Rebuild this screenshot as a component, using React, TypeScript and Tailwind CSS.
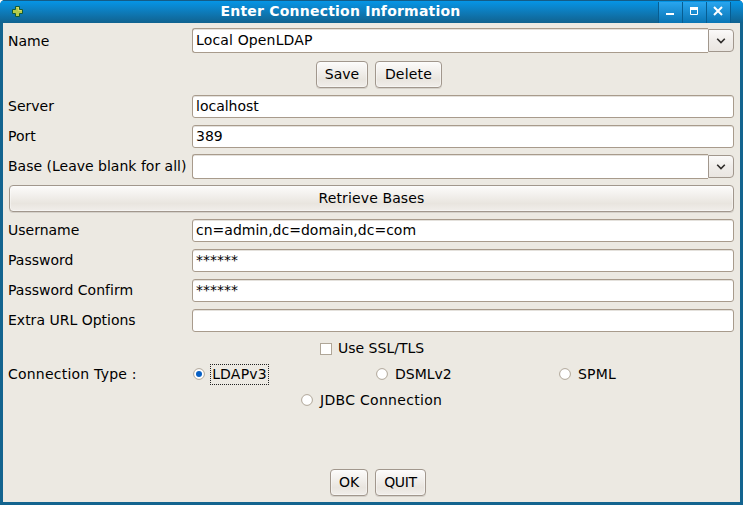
import type { ReactNode } from "react";

const fieldBorder = "border border-[#a89b8c] shadow-[inset_0_1px_0_#e4e1dc]";

function Label({ children, className = "pb-[2px]" }: { children: ReactNode; className?: string }) {
  return <span className={`whitespace-nowrap ${className}`}>{children}</span>;
}

function Row({
  label,
  children,
  className = "",
  labelClass = "pb-[2px]",
}: {
  label: string;
  children: ReactNode;
  className?: string;
  labelClass?: string;
}) {
  return (
    <div className={`flex h-[23px] items-center pl-[5px] pr-[6px] ${className}`}>
      <Label className={`w-[184px] shrink-0 ${labelClass}`}>{label}</Label>
      {children}
    </div>
  );
}

function TextField({ value }: { value: string }) {
  return (
    <div className={`flex h-[23px] flex-1 items-center rounded-[3px] bg-white pb-[2px] pl-[3px] ${fieldBorder}`}>
      {value}
    </div>
  );
}

function Combo({ value }: { value: string }) {
  return (
    <div className="flex h-[25px] flex-1 items-center">
      <div
        className={`flex h-[25px] flex-1 items-center rounded-l-[3px] border-r-0 bg-white pb-[2px] pl-[3px] tracking-[0.15px] ${fieldBorder}`}
      >
        {value}
      </div>
      <div className="flex h-[23px] w-[26px] items-center justify-center rounded-r-[4px] border border-[#a1978d] bg-linear-to-b from-[#fbfaf9] via-[#f0edea] to-[#eae6e1]">
        <svg width="10" height="6" viewBox="0 0 10 6" fill="none" stroke="#2f2c2a" strokeWidth="1.6">
          <path d="M1.2.8 5 4.6 8.8.8" />
        </svg>
      </div>
    </div>
  );
}

function Button({ children, className }: { children: ReactNode; className: string }) {
  return (
    <button
      className={`flex h-[27px] items-center justify-center rounded-[4px] border border-[#a1978d] bg-linear-to-b from-[#fbfaf9] from-5% via-[#e9e5df] via-70% to-[#f1eeea] pb-[2px] shadow-[0_1px_0_#d5d1ca,inset_0_0_0_1px_#ffffff66] ${className}`}
    >
      {children}
    </button>
  );
}

function Radio({ checked = false }: { checked?: boolean }) {
  return (
    <svg className="-mt-px shrink-0" width="12" height="12" viewBox="0 0 12 12">
      <circle cx="6" cy="6" r="5.4" fill="#fff" stroke="#afa698" />
      {checked && <circle cx="6" cy="6" r="3" fill="#0860c4" />}
    </svg>
  );
}

function Caption({ kind }: { kind: "min" | "max" | "close" }) {
  return (
    <div className="h-[21px] w-6 border-l border-[#075d91] bg-linear-to-b from-[#28a5ef] to-[#0875b4]">
      <svg width="23" height="21" viewBox="0 0 23 21" fill="none" stroke="#fff">
        {kind === "min" && <path d="M7 12h8" strokeWidth="2" />}
        {kind === "max" && <path d="M7.5 6v6.5h7V6" strokeWidth="1" />}
        {kind === "max" && <path d="M7 6.5h8" strokeWidth="3" />}
        {kind === "close" && <path d="m7 5 8 8M15 5l-8 8" strokeWidth="2" />}
      </svg>
    </div>
  );
}

export default function App() {
  return (
    <div className="flex h-[505px] w-[743px] flex-col bg-white font-['DejaVu_Sans',sans-serif] text-[14px] leading-4 text-black [font-variant-ligatures:none]">
      <div className="flex h-[505px] flex-col overflow-hidden rounded-t-[5px] bg-[#13648f]">
        <header className="flex h-[23px] items-start border-t border-t-[#145c86] bg-linear-to-b from-[#0595e6] to-[#10628f]">
          <svg className="ml-3 mt-[5px] shrink-0" width="11" height="11" viewBox="0 0 11 11">
            <path d="M3.5.5h4v3h3v4h-3v3h-4v-3h-3v-4h3z" fill="#b5cb4a" stroke="#145b36" />
            <path d="M4.5 1.5h2v3h3" fill="none" stroke="#d5dc72" />
          </svg>
          <h1 className="w-[635px] whitespace-nowrap pt-[3px] text-center text-[14px] font-bold leading-[15px] tracking-[0.22px] text-white">
            Enter Connection Information
          </h1>
          <div className="mt-px flex">
            <Caption kind="min" />
            <Caption kind="max" />
            <Caption kind="close" />
            <div className="h-[21px] w-px bg-[#075d91]" />
          </div>
        </header>
        <main className="mx-[3px] flex h-[479px] flex-col bg-[#ece9e2]">
          <Row label="Name" className="mt-[6px]" labelClass=""><Combo value="Local OpenLDAP" /></Row>
          <div className="mt-[9px] flex gap-[7px] pl-[313px]">
            <Button className="w-[52px]">Save</Button>
            <Button className="w-[67px] tracking-[0.2px]">Delete</Button>
          </div>
          <div className="mt-[7px] flex flex-col gap-[7px]">
            <Row label="Server"><TextField value="localhost" /></Row>
            <Row label="Port"><TextField value="389" /></Row>
            <Row label="Base (Leave blank for all)"><Combo value="" /></Row>
          </div>
          <div className="mt-[7px] flex pl-[6px] pr-[6px]">
            <Button className="flex-1 tracking-[0.12px]">Retrieve Bases</Button>
          </div>
          <div className="mt-[7px] flex flex-col gap-[7px]">
            <Row label="Username"><TextField value="cn=admin,dc=domain,dc=com" /></Row>
            <Row label="Password"><TextField value="******" /></Row>
            <Row label="Password Confirm"><TextField value="******" /></Row>
            <Row label="Extra URL Options"><TextField value="" /></Row>
          </div>
          <div className="mt-[8px] flex h-[18px] items-center gap-[6px] pl-[317px]">
            <span className="size-3 border border-[#afa698] bg-white" />
            <Label>Use SSL/TLS</Label>
          </div>
          <div className="mt-[6px] flex h-[21px] items-center pl-[5px]">
            <Label className="w-[185px] pb-[2px] tracking-[0.22px]">Connection Type :</Label>
            <div className="flex w-[183px] items-center gap-[5px]">
              <Radio checked />
              <span className="flex h-[21px] w-[59px] items-center justify-center border border-dotted border-[#222] pb-[2px] tracking-[0.2px]">LDAPv3</span>
            </div>
            <div className="flex w-[183px] items-center gap-[7px]"><Radio /><Label>DSMLv2</Label></div>
            <div className="flex items-center gap-[7px]"><Radio /><Label className="pb-[2px] tracking-[0.2px]">SPML</Label></div>
          </div>
          <div className="mt-[5px] flex h-[21px] items-center gap-[7px] pl-[298px]">
            <Radio /><Label className="pb-[2px] tracking-[0.3px]">JDBC Connection</Label>
          </div>
          <div className="mt-[58px] flex gap-[7px] pl-[327px]">
            <Button className="w-[38px]">OK</Button>
            <Button className="w-[51px] tracking-[-0.3px]">QUIT</Button>
          </div>
        </main>
      </div>
    </div>
  );
}
